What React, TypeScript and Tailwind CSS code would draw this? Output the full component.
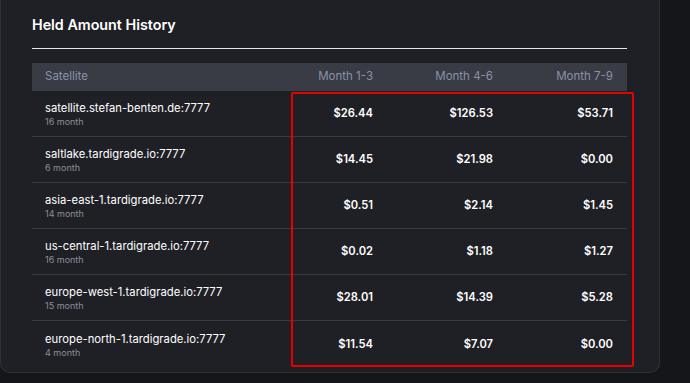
const rows = [
  { name: "satellite.stefan-benten.de:7777", age: "16 month", m1: "$26.44", m2: "$126.53", m3: "$53.71" },
  { name: "saltlake.tardigrade.io:7777", age: "6 month", m1: "$14.45", m2: "$21.98", m3: "$0.00" },
  { name: "asia-east-1.tardigrade.io:7777", age: "14 month", m1: "$0.51", m2: "$2.14", m3: "$1.45" },
  { name: "us-central-1.tardigrade.io:7777", age: "16 month", m1: "$0.02", m2: "$1.18", m3: "$1.27" },
  { name: "europe-west-1.tardigrade.io:7777", age: "15 month", m1: "$28.01", m2: "$14.39", m3: "$5.28" },
  { name: "europe-north-1.tardigrade.io:7777", age: "4 month", m1: "$11.54", m2: "$7.07", m3: "$0.00" },
];

const App = () => {
  return (
    <div
      className="relative w-[690px] h-[383px] overflow-hidden bg-[#151619]"
      style={{ fontFamily: "Inter, 'Noto Sans', sans-serif" }}
    >
      <div className="w-[660px] h-[373px] rounded-b-[10px] border border-t-0 border-[#303137] bg-[#1f2026] pl-[31px] pr-[32px] pt-[15px]">
        <h2 className="text-[14.3px] leading-[20px] font-semibold text-white">Held Amount History</h2>
        <div className="mt-[13px] h-px bg-[#e6e6e8]" />

        {/* table */}
        <div className="mt-[14px]">
          <div className="grid grid-cols-[1fr_120px_120px_120px] pr-[14px] h-[28px] items-center bg-[#393b45] text-[11.5px] text-[#8a93a6]">
            <div className="pl-[13px]">Satellite</div>
            <div className="text-right">Month 1-3</div>
            <div className="text-right">Month 4-6</div>
            <div className="text-right">Month 7-9</div>
          </div>
          {rows.map((r, i) => (
            <div
              key={r.name}
              className={`grid grid-cols-[1fr_120px_120px_120px] pr-[14px] h-[46px] items-center ${
                i < rows.length - 1 ? "border-b border-[#3a3b42]" : ""
              }`}
            >
              <div className="pl-[13px] pt-[2px] flex flex-col">
                <span className="text-[11.25px] leading-[15px] text-white">{r.name}</span>
                <span className="text-[9px] leading-[12px] text-[#8a8f9c]">{r.age}</span>
              </div>
              <div className="text-right text-[11.2px] font-semibold text-white">{r.m1}</div>
              <div className="text-right text-[11.2px] font-semibold text-white">{r.m2}</div>
              <div className="text-right text-[11.2px] font-semibold text-white">{r.m3}</div>
            </div>
          ))}
        </div>
      </div>

      {/* red highlight annotation */}
      <div className="absolute left-[291px] top-[92px] w-[343px] h-[275px] border-2 border-[#e60000] rounded-[2px] pointer-events-none" />
    </div>
  );
};

export default App;
